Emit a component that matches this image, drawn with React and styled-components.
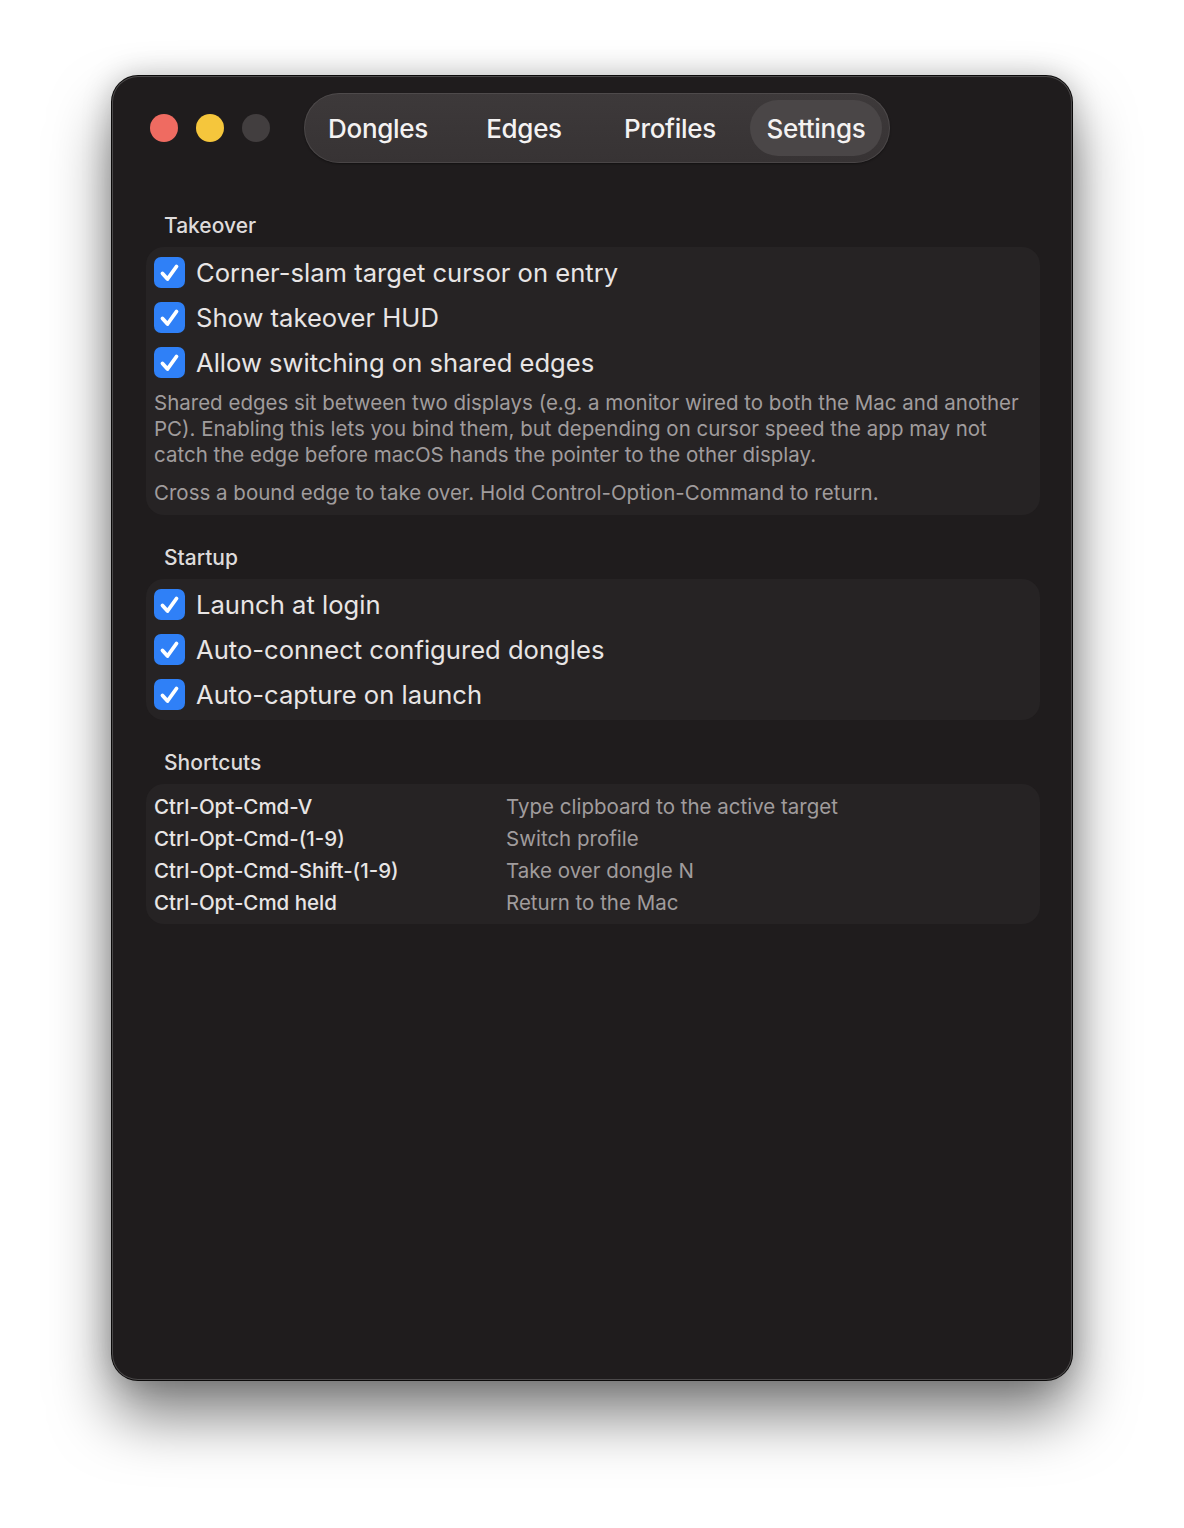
import React from 'react';
import styled, {createGlobalStyle} from 'styled-components';

const GlobalStyle = createGlobalStyle`
    html, body {
        margin: 0;
        padding: 0;
        background: #ffffff;
    }
    body {
        font-family: Inter, "Noto Sans", "Liberation Sans", sans-serif;
        -webkit-font-smoothing: antialiased;
    }
`;

const Page = styled.div`
    padding: 76px 112px 148px;
`;

const Window = styled.div`
    box-sizing: border-box;
    width: 960px;
    height: 1304px;
    background: #1f1c1d;
    border-radius: 26px;
    box-shadow:
        0 0 0 1px #0b0a0a,
        inset 0 0 0 1px rgba(255,255,255,0.2),
        0 36px 60px rgba(0,0,0,0.5),
        0 0 30px rgba(0,0,0,0.22);
    display: flex;
    flex-direction: column;
`;

const TitleBar = styled.div`
    display: flex;
    align-items: center;
    padding: 17px 0 0 38px;
    height: 70px;
`;

const Lights = styled.div`
    display: flex;
    gap: 18px;
    margin-right: 34px;
`;

const Light = styled.span`
    width: 28px;
    height: 28px;
    border-radius: 50%;
    background: ${p => p.color};
`;

const TabBar = styled.div`
    box-sizing: border-box;
    display: flex;
    align-items: center;
    gap: 14px;
    height: 70px;
    padding: 0 8px;
    border-radius: 35px;
    background: linear-gradient(#3d393a, #373334);
    box-shadow: inset 0 0 0 1px rgba(255,255,255,0.09), 0 1px 2px rgba(0,0,0,0.4);
`;

const Tab = styled.div`
    width: 132px;
    height: 56px;
    border-radius: 28px;
    display: flex;
    align-items: center;
    justify-content: center;
    font-size: 26px;
    font-weight: 500;
    color: #f4f2f2;
    letter-spacing: -0.3px;
    background: ${p => p.active ? '#4a4647' : 'transparent'};
`;

const Content = styled.div`
    display: flex;
    flex-direction: column;
    padding: 50px 32px 0 34px;
`;

const Section = styled.div`
    display: flex;
    flex-direction: column;
    gap: 8px;
    margin-bottom: 30px;
`;

const SectionTitle = styled.div`
    padding-left: 18px;
    font-size: 21px;
    line-height: 26px;
    font-weight: 500;
    color: #dedbdb;
`;

const Card = styled.div`
    background: #262324;
    border-radius: 18px;
    padding: ${p => p.pad || '3px 8px'};
    display: flex;
    flex-direction: column;
`;

const CheckRow = styled.label`
    display: flex;
    align-items: center;
    gap: 11px;
    height: 45px;
    font-size: 25.6px;
    color: #e8e5e5;
`;

const Box = styled.span`
    width: 31px;
    height: 31px;
    border-radius: 7px;
    background: #2f80f7;
    display: flex;
    align-items: center;
    justify-content: center;
`;

const Note = styled.p`
    margin: ${p => p.first ? '5px' : '12px'} 0 0;
    font-size: 20.5px;
    line-height: 26px;
    color: #a09c9d;
`;

const ShortcutRow = styled.div`
    display: grid;
    grid-template-columns: 352px 1fr;
    height: 32px;
    align-items: center;
    font-size: 20.5px;
`;

const Keys = styled.span`
    color: #e8e5e5;
    font-weight: 500;
`;

const Action = styled.span`
    color: #a09c9d;
`;

const Check = ({label}) => (
    <CheckRow>
        <Box>
            <svg width="31" height="31" viewBox="0 0 31 31">
                <path d="M8.5 16.5 L13.5 22 L22.5 9.5" fill="none" stroke="#fff" strokeWidth="3.8" strokeLinecap="round" strokeLinejoin="round"/>
            </svg>
        </Box>
        {label}
    </CheckRow>
);

const shortcuts = [
    ['Ctrl-Opt-Cmd-V', 'Type clipboard to the active target'],
    ['Ctrl-Opt-Cmd-(1-9)', 'Switch profile'],
    ['Ctrl-Opt-Cmd-Shift-(1-9)', 'Take over dongle N'],
    ['Ctrl-Opt-Cmd held', 'Return to the Mac'],
];

const App = () => {
    return (
        <Page>
            <GlobalStyle/>
            <Window>
                <TitleBar>
                    <Lights>
                        <Light color="#ef6b61"/>
                        <Light color="#f5c63c"/>
                        <Light color="#423e3f"/>
                    </Lights>
                    <TabBar>
                        <Tab>Dongles</Tab>
                        <Tab>Edges</Tab>
                        <Tab>Profiles</Tab>
                        <Tab active>Settings</Tab>
                    </TabBar>
                </TitleBar>
                <Content>
                    <Section>
                        <SectionTitle>Takeover</SectionTitle>
                        <Card pad="3px 8px 9px">
                            <Check label="Corner-slam target cursor on entry"/>
                            <Check label="Show takeover HUD"/>
                            <Check label="Allow switching on shared edges"/>
                            <Note first>
                                Shared edges sit between two displays (e.g. a monitor wired to both the Mac and another
                                PC). Enabling this lets you bind them, but depending on cursor speed the app may not
                                catch the edge before macOS hands the pointer to the other display.
                            </Note>
                            <Note>Cross a bound edge to take over. Hold Control-Option-Command to return.</Note>
                        </Card>
                    </Section>
                    <Section>
                        <SectionTitle>Startup</SectionTitle>
                        <Card>
                            <Check label="Launch at login"/>
                            <Check label="Auto-connect configured dongles"/>
                            <Check label="Auto-capture on launch"/>
                        </Card>
                    </Section>
                    <Section>
                        <SectionTitle>Shortcuts</SectionTitle>
                        <Card pad="6px 8px 6px">
                            {shortcuts.map(([k, a]) => (
                                <ShortcutRow key={k}>
                                    <Keys>{k}</Keys>
                                    <Action>{a}</Action>
                                </ShortcutRow>
                            ))}
                        </Card>
                    </Section>
                </Content>
            </Window>
        </Page>
    );
};

export default App;
